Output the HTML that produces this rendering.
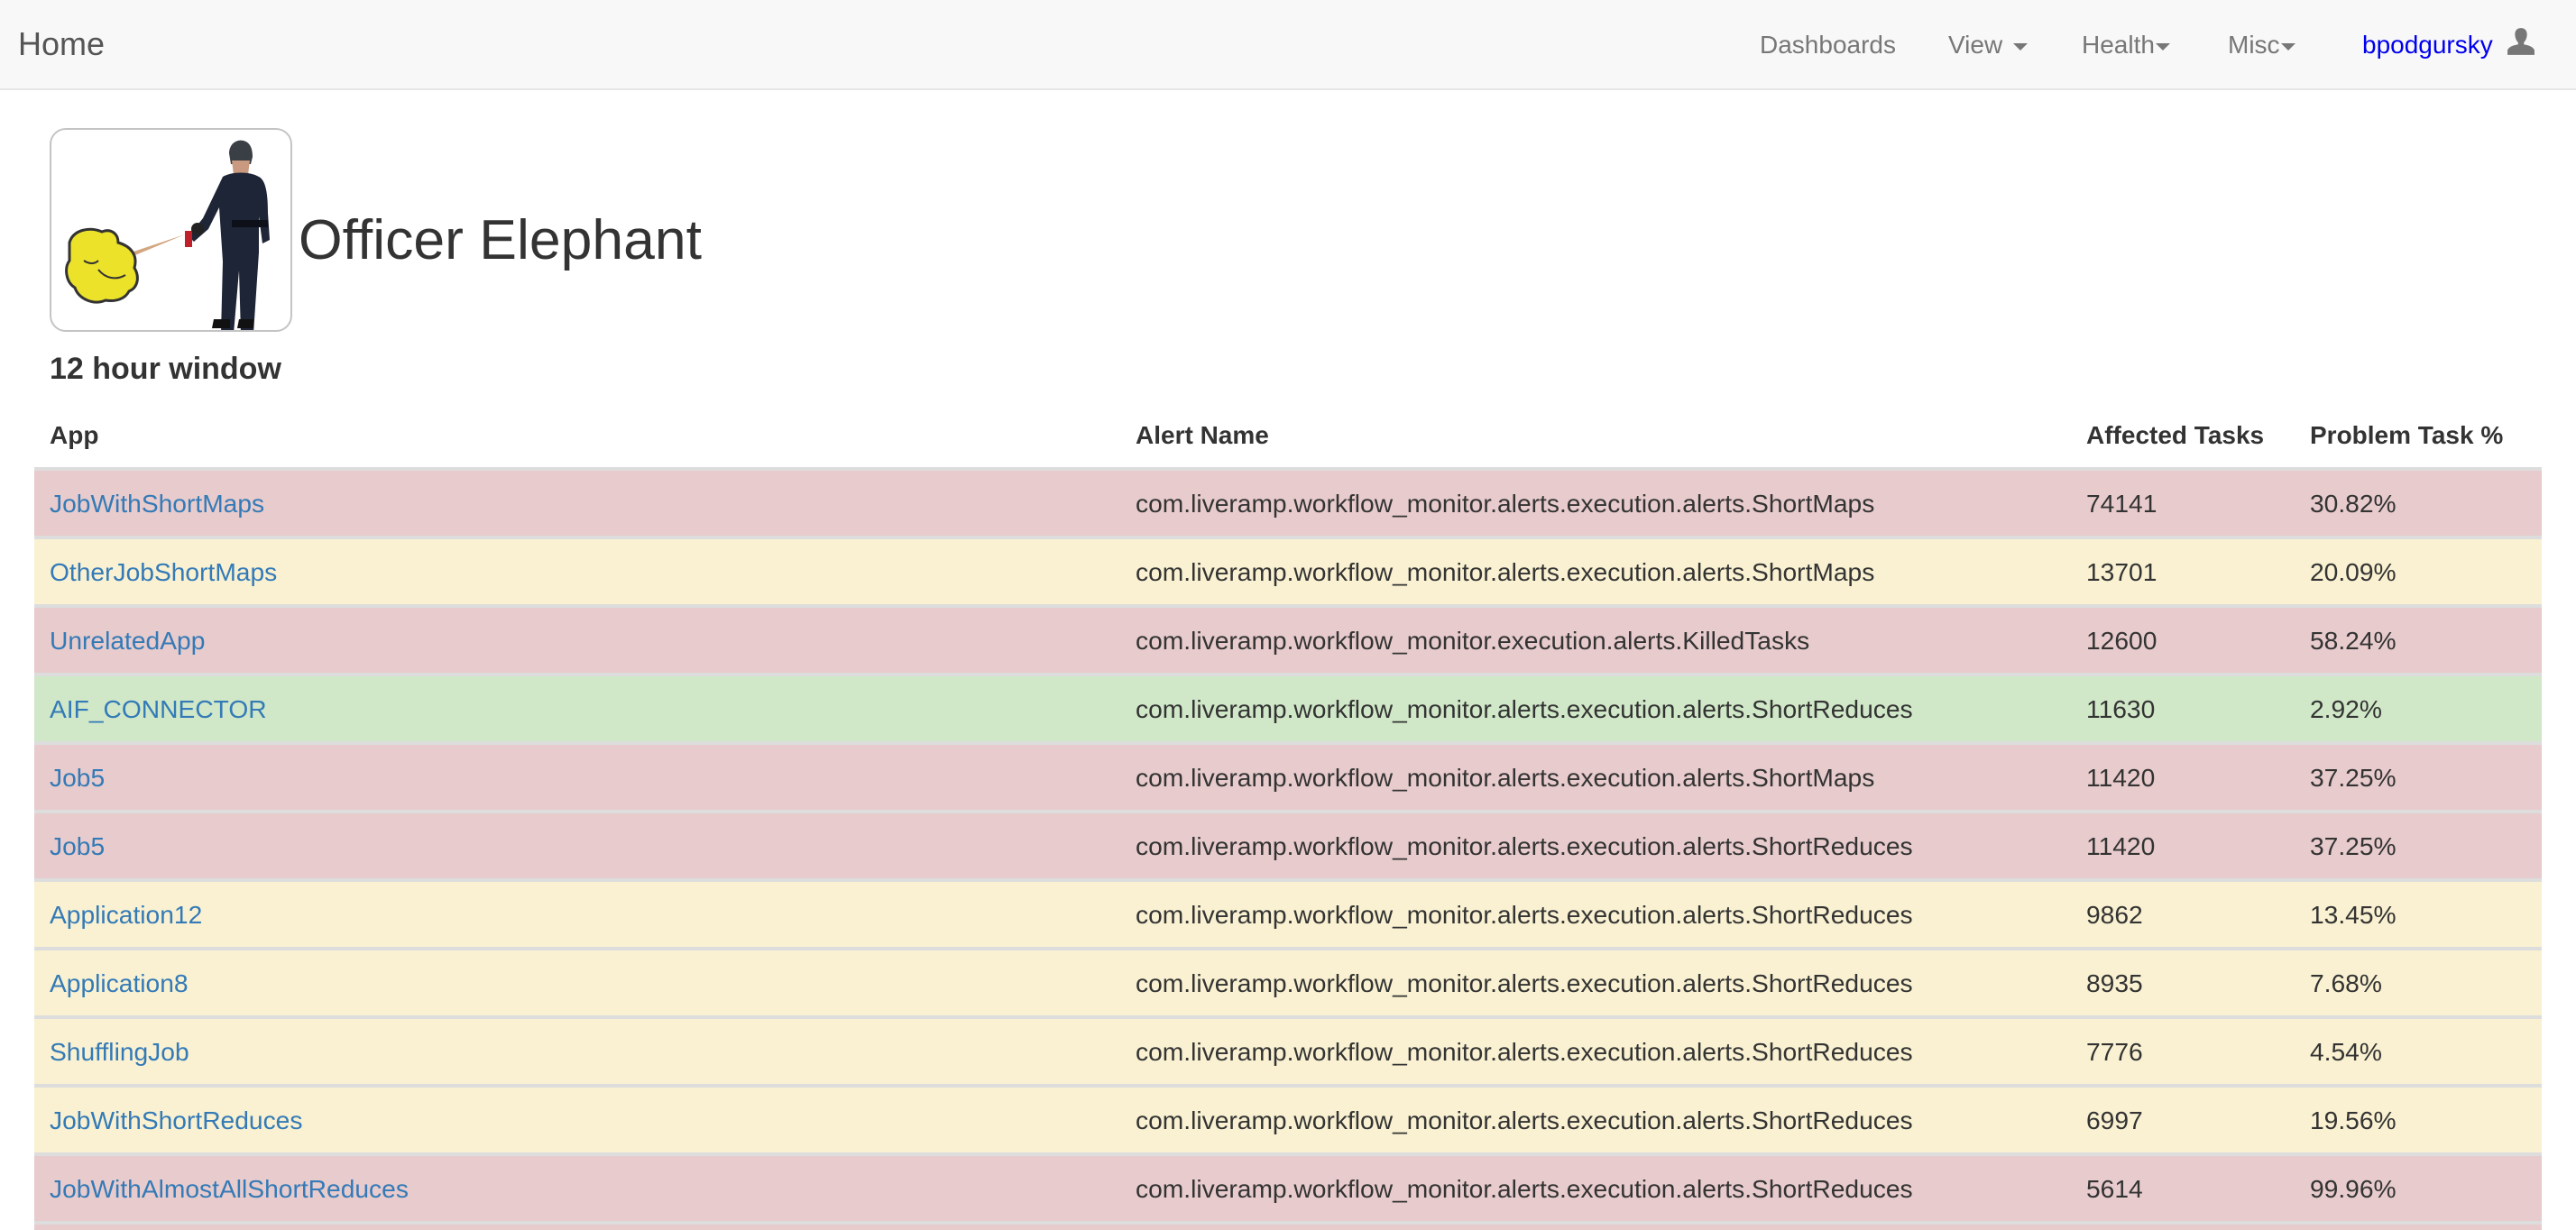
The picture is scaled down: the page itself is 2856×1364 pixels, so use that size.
<!DOCTYPE html>
<html><head><meta charset="utf-8"><style>
*{margin:0;padding:0;box-sizing:border-box}
html,body{width:2856px;height:1364px;overflow:hidden;background:#fff;font-family:"Liberation Sans",Arial,sans-serif;color:#333}
.nav{position:absolute;left:0;top:0;width:2856px;height:100px;background:#f8f8f8;border-bottom:2px solid #e7e7e7}
.a{position:absolute;white-space:nowrap}
.ni{font-size:28px;color:#777;top:32px;line-height:36px}
.car{display:inline-block;width:0;height:0;border-left:8px solid transparent;border-right:8px solid transparent;border-top:8px solid #777;vertical-align:middle;margin-left:4px}
.row{position:absolute;left:38px;width:2780px;height:76px;border-top:4px solid #ddd;font-size:28.2px;line-height:72px}
.row span{position:absolute;top:0}
.p{background:#e8cbcc}.y{background:#f9f1d1}.g{background:#d0e8c8}
.c1{left:17px;color:#337ab7}.c2{left:1221px}.c3{left:2275px}.c4{left:2523px}
.h{position:absolute;top:466px;font-size:28px;font-weight:bold;line-height:34px}
</style></head><body>
<div class="nav"></div>
<div class="a" style="left:20px;top:29px;font-size:36px;line-height:40px;color:#555">Home</div>
<div class="a ni" style="left:1951px">Dashboards</div>
<div class="a ni" style="left:2160px">View <span class="car"></span></div>
<div class="a ni" style="left:2308px">Health<span class="car" style="margin-left:1px"></span></div>
<div class="a ni" style="left:2470px">Misc<span class="car" style="margin-left:1px"></span></div>
<div class="a ni" style="left:2619px;color:#0000ee">bpodgursky</div>
<svg class="a" style="left:2779px;top:30px" width="32" height="32" viewBox="0 0 30 30"><path d="M15 1c-5 0-7 4-6 9 0.5 3 2 5 3 6v2c-6 1-10 3-11 6v5h28v-5c-1-3-5-5-11-6v-2c1-1 2.5-3 3-6 1-5-1-9-6-9z" fill="#777"/></svg>

<div class="a" style="left:55px;top:142px;width:269px;height:226px;border:2px solid #c4c4c4;border-radius:18px;background:#fff;overflow:hidden">
<svg width="265" height="222" viewBox="0 0 265 222">
 <path d="M197 26c0-10 8-16 16-14 8 2 10 10 10 18l-2 8h-22z" fill="#3a3f45"/>
 <path d="M200 34h20l-2 16h-16z" fill="#c99a80"/>
 <path d="M190 52c10-6 30-6 40 0 8 4 10 20 10 40l2 30-8 4-4-30 0 40-4 60-2 30h-14l-2-70-6 70h-14l2-80-4-60-12 24-16 14-6-6 16-20z" fill="#1e2536"/>
 <rect x="200" y="100" width="40" height="8" fill="#0d1018"/>
 <path d="M180 210h18v10h-20z" fill="#111"/>
 <path d="M208 210h16v10h-18z" fill="#111"/>
 <rect x="148" y="112" width="8" height="18" fill="#c0202a"/>
 <circle cx="162" cy="110" r="7" fill="#222"/>
 <path d="M148 116l-72 30 -3-5z" fill="#c89060" opacity=".8"/>
 <path d="M20 125c4-14 22-18 36-12 10-4 18 2 18 12 14 4 22 14 18 28 6 10 4 22-6 26-4 8-14 12-26 10-14 6-30-2-34-14-10-6-12-22-6-30z" fill="#ece22a" stroke="#333" stroke-width="3"/>
 <path d="M36 145c6 4 12 4 16 0M52 155c8 10 20 12 30 6" stroke="#333" stroke-width="2" fill="none"/>
</svg>
</div>
<div class="a" style="left:331px;top:230px;font-size:62.5px;line-height:72px">Officer Elephant</div>
<div class="a" style="left:55px;top:389px;font-size:34px;font-weight:bold;line-height:40px;color:#333">12 hour window</div>

<div class="h" style="left:55px">App</div>
<div class="h" style="left:1259px">Alert Name</div>
<div class="h" style="left:2313px">Affected Tasks</div>
<div class="h" style="left:2561px">Problem Task %</div>

<div class="row p" style="top:518px"><span class="c1">JobWithShortMaps</span><span class="c2">com.liveramp.workflow_monitor.alerts.execution.alerts.ShortMaps</span><span class="c3">74141</span><span class="c4">30.82%</span></div>
<div class="row y" style="top:594px"><span class="c1">OtherJobShortMaps</span><span class="c2">com.liveramp.workflow_monitor.alerts.execution.alerts.ShortMaps</span><span class="c3">13701</span><span class="c4">20.09%</span></div>
<div class="row p" style="top:670px"><span class="c1">UnrelatedApp</span><span class="c2">com.liveramp.workflow_monitor.execution.alerts.KilledTasks</span><span class="c3">12600</span><span class="c4">58.24%</span></div>
<div class="row g" style="top:746px"><span class="c1">AIF_CONNECTOR</span><span class="c2">com.liveramp.workflow_monitor.alerts.execution.alerts.ShortReduces</span><span class="c3">11630</span><span class="c4">2.92%</span></div>
<div class="row p" style="top:822px"><span class="c1">Job5</span><span class="c2">com.liveramp.workflow_monitor.alerts.execution.alerts.ShortMaps</span><span class="c3">11420</span><span class="c4">37.25%</span></div>
<div class="row p" style="top:898px"><span class="c1">Job5</span><span class="c2">com.liveramp.workflow_monitor.alerts.execution.alerts.ShortReduces</span><span class="c3">11420</span><span class="c4">37.25%</span></div>
<div class="row y" style="top:974px"><span class="c1">Application12</span><span class="c2">com.liveramp.workflow_monitor.alerts.execution.alerts.ShortReduces</span><span class="c3">9862</span><span class="c4">13.45%</span></div>
<div class="row y" style="top:1050px"><span class="c1">Application8</span><span class="c2">com.liveramp.workflow_monitor.alerts.execution.alerts.ShortReduces</span><span class="c3">8935</span><span class="c4">7.68%</span></div>
<div class="row y" style="top:1126px"><span class="c1">ShufflingJob</span><span class="c2">com.liveramp.workflow_monitor.alerts.execution.alerts.ShortReduces</span><span class="c3">7776</span><span class="c4">4.54%</span></div>
<div class="row y" style="top:1202px"><span class="c1">JobWithShortReduces</span><span class="c2">com.liveramp.workflow_monitor.alerts.execution.alerts.ShortReduces</span><span class="c3">6997</span><span class="c4">19.56%</span></div>
<div class="row p" style="top:1278px"><span class="c1">JobWithAlmostAllShortReduces</span><span class="c2">com.liveramp.workflow_monitor.alerts.execution.alerts.ShortReduces</span><span class="c3">5614</span><span class="c4">99.96%</span></div>
<div class="row p" style="top:1354px;height:10px"></div>
</body></html>
